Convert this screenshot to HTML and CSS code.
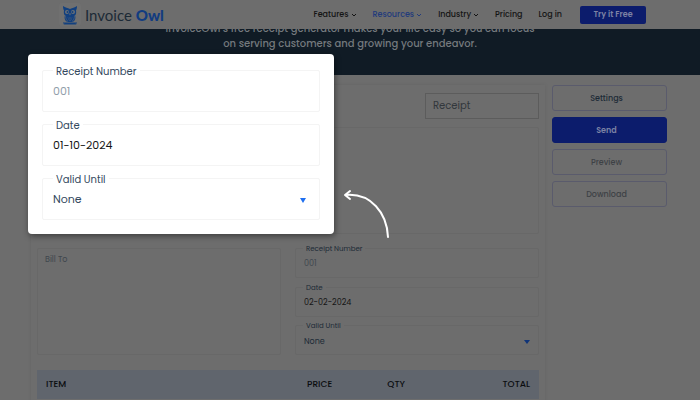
FILE: index.html
```html
<!DOCTYPE html>
<html lang="en">
<head>
    <meta charset="UTF-8">
    <meta name="viewport" content="width=device-width, initial-scale=1.0">
    <title>Receipt Generator - Invoice Owl</title>
    <link rel="stylesheet" href="styles.css">
</head>
<body>
    <header class="header">
        <a href="#" class="logo">
            <span class="logo-icon">
                <svg viewBox="0 0 32 40" width="16" height="20">
                    <path fill="#12407f" d="M2 2 C7 6 11 5 16 8 C21 5 25 6 30 2 C30 7 29 9 28 11 C29 16 28 19 26 21 C28 26 26 32 21 34 L11 34 C6 32 4 26 6 21 C4 19 3 16 4 11 C3 9 2 7 2 2 Z"/>
                    <circle cx="10" cy="14" r="4" fill="#6a6f77"/>
                    <circle cx="22" cy="14" r="4" fill="#6a6f77"/>
                    <circle cx="11" cy="14" r="2" fill="#12407f"/>
                    <circle cx="21" cy="14" r="2" fill="#12407f"/>
                    <path fill="#6a6f77" d="M14 17 L18 17 L16 21 Z"/>
                    <path fill="none" stroke="#6a6f77" stroke-width="1" d="M7 21 C7 27 9 31 12 33 M25 21 C25 27 23 31 20 33 M12 25 L14 27 L16 25 L18 27 L20 25 M13 29 L16 31 L19 29"/>
                    <path fill="#12407f" d="M2 35 H30 V37 H27 L29 39 H3 L5 37 H2 Z"/>
                </svg>
            </span>
            <span class="logo-text">Invoice <b>Owl</b></span>
        </a>
        <nav class="nav">
            <a href="#">Features <svg viewBox="0 0 6 4" width="6" height="4"><path d="M1 1 L3 3 L5 1"/></svg></a>
            <a href="#" class="active">Resources <svg viewBox="0 0 6 4" width="6" height="4"><path d="M1 1 L3 3 L5 1"/></svg></a>
            <a href="#">Industry <svg viewBox="0 0 6 4" width="6" height="4"><path d="M1 1 L3 3 L5 1"/></svg></a>
            <a href="#">Pricing</a>
            <a href="#">Log in</a>
        </nav>
        <button type="button" class="try-btn">Try it Free</button>
    </header>

    <section class="hero">
        <p>InvoiceOwl’s free receipt generator makes your life easy so you can focus<br>on serving customers and growing your endeavor.</p>
    </section>

    <main class="main">
        <form class="receipt">
            <input type="text" class="receipt-title" value="Receipt" aria-label="Title">
            <div class="company-box"></div>
            <div class="details">
                <textarea class="bill-to" placeholder="Bill To" aria-label="Bill To"></textarea>
                <div class="fields">
                    <div class="field">
                        <label for="receiptNo">Receipt Number</label>
                        <input type="text" id="receiptNo" placeholder="001">
                    </div>
                    <div class="field">
                        <label for="receiptDate">Date</label>
                        <input type="text" id="receiptDate" class="date" value="02-02-2024">
                    </div>
                    <div class="field select-field">
                        <label for="validUntil">Valid Until</label>
                        <select id="validUntil">
                            <option>None</option>
                        </select>
                    </div>
                </div>
            </div>
            <table class="items">
                <thead>
                    <tr>
                        <th class="item">ITEM</th>
                        <th class="price">PRICE</th>
                        <th>QTY</th>
                        <th class="total">TOTAL</th>
                    </tr>
                </thead>
            </table>
        </form>

        <aside class="actions">
            <button type="button">Settings</button>
            <button type="button" class="send">Send</button>
            <button type="button" class="muted">Preview</button>
            <button type="button" class="muted">Download</button>
        </aside>
    </main>

    <!-- Highlighted fields over the dimmed page -->
    <div class="popup">
        <div class="field">
            <label for="popupNo">Receipt Number</label>
            <input type="text" id="popupNo" placeholder="001">
        </div>
        <div class="field">
            <label for="popupDate">Date</label>
            <input type="text" id="popupDate" class="date" value="01-10-2024">
        </div>
        <div class="field select-field">
            <label for="popupValid">Valid Until</label>
            <select id="popupValid">
                <option>None</option>
            </select>
        </div>
    </div>
    <svg class="arrow" viewBox="0 0 50 54" width="50" height="54">
        <path d="M47 50 C46 26 30 6 5 8 M9 4 L4 8 L9 12"/>
    </svg>
</body>
</html>
```

FILE: styles.css
```css
* {
    box-sizing: border-box;
}

body {
    position: relative;
    margin: 0;
    min-height: 100vh;
    overflow: hidden;
    background-color: #6d6d6d;
    font-family: Poppins, Inter, sans-serif;
    color: #1c2a36;
}

input,
select,
textarea,
button {
    font-family: inherit;
}

.header {
    display: flex;
    align-items: center;
    height: 29px;
    padding: 0 54px 0 59px;
    background-color: #6d6d6d;
}

.logo {
    display: flex;
    align-items: center;
    gap: 4px;
    color: #1c2a36;
    text-decoration: none;
}

.logo-icon {
    display: flex;
    align-items: center;
    justify-content: center;
    width: 22px;
    height: 23px;
    border-radius: 3px;
    background-color: #707070;
}

.logo-text {
    font-family: Lato, sans-serif;
    font-size: 15px;
    line-height: 20px;
    font-weight: 400;
    white-space: nowrap;
}

.logo-text b {
    font-weight: 900;
    color: #123c80;
}

.nav {
    display: flex;
    gap: 16px;
    margin-left: auto;
}

.nav a {
    display: flex;
    align-items: center;
    gap: 2px;
    font-size: 8px;
    line-height: 12px;
    font-weight: 500;
    color: #141414;
    text-decoration: none;
    white-space: nowrap;
}

.nav a.active {
    color: #223b7c;
}

.nav svg {
    fill: none;
    stroke: currentColor;
}

.try-btn {
    width: 66px;
    height: 18px;
    margin-left: 18px;
    padding: 0;
    border: none;
    border-radius: 2px;
    background-color: #0c1c6c;
    color: #7c82a4;
    font-size: 8px;
    font-weight: 600;
}

.hero {
    display: flex;
    align-items: flex-end;
    justify-content: center;
    height: 46px;
    padding-bottom: 24px;
    overflow: hidden;
    background-color: #101b25;
    color: #74797d;
    text-align: center;
}

.hero p {
    margin: 0;
    font-size: 10px;
    line-height: 15px;
    font-weight: 500;
}

.main {
    display: grid;
    grid-template-columns: minmax(0, 1fr) 115px;
    gap: 7px;
    padding: 10px 33px 0 31px;
}

.receipt {
    padding: 8px 6px;
    box-shadow: 0 0 4px rgba(0, 0, 0, 0.08);
}

.receipt-title {
    display: block;
    width: 114px;
    height: 26px;
    margin-left: auto;
    padding: 0 7px;
    border: 1px solid #5c5c5c;
    background: transparent;
    font-size: 10px;
    color: #32373c;
}

.company-box {
    height: 107px;
    margin: 8px 0 14px;
    border: 1px solid #686868;
    border-radius: 2px;
}

.details {
    display: grid;
    grid-template-columns: 1fr 1fr;
    gap: 14px;
    height: 107px;
}

.bill-to {
    padding: 5px 7px;
    border: 1px solid #686868;
    border-radius: 2px;
    background: transparent;
    font-size: 8px;
    line-height: 12px;
    resize: none;
}

.bill-to::placeholder {
    color: #3f474e;
}

.fields {
    display: flex;
    flex-direction: column;
    justify-content: space-between;
}

.field {
    position: relative;
    height: 30px;
    border: 1px solid #686868;
    border-radius: 2px;
}

.field label {
    position: absolute;
    top: -5px;
    left: 7px;
    padding: 0 3px;
    background-color: #6d6d6d;
    font-size: 7px;
    line-height: 10px;
}

.field input,
.field select {
    display: block;
    width: 100%;
    height: 100%;
    padding: 2px 8px 0;
    border: none;
    background: transparent;
    appearance: none;
    font-size: 8px;
    color: #1c2a36;
}

.field input::placeholder {
    color: #3f474e;
}

.field .date {
    color: #141414;
}

.select-field::after {
    content: "";
    position: absolute;
    top: 14px;
    right: 8px;
    width: 6px;
    height: 4px;
    background-color: #0f3478;
    clip-path: polygon(0 0, 100% 0, 50% 100%);
    pointer-events: none;
}

.items {
    width: 100%;
    margin-top: 15px;
    border-collapse: collapse;
    table-layout: fixed;
    background-color: #60656d;
}

.items th {
    height: 29px;
    padding: 0 9px;
    font-size: 9px;
    font-weight: 500;
    text-align: left;
    color: #0b0d10;
}

.items .item {
    width: 52%;
}

.items .price {
    width: 16%;
}

.items .total {
    text-align: right;
}

.actions {
    display: flex;
    flex-direction: column;
    gap: 6px;
}

.actions button {
    height: 26px;
    padding: 1px 6px 0 0;
    border: 1px solid #5a5b6c;
    border-radius: 3px;
    background: transparent;
    font-size: 8px;
    font-weight: 500;
    color: #1c2a36;
}

.actions .send {
    border-color: #0c1c6c;
    background-color: #0c1c6c;
    color: #7c82a4;
    font-weight: 600;
}

.actions .muted {
    color: #3e4246;
}

.popup {
    position: absolute;
    top: 54px;
    left: 28px;
    display: flex;
    flex-direction: column;
    gap: 12px;
    width: 306px;
    padding: 16px 14px 14px;
    border-radius: 4px;
    background-color: #fff;
    box-shadow: 1px 2px 6px rgba(0, 0, 0, 0.45);
}

.popup .field {
    height: 42px;
    border-color: #f4f4f4;
}

.popup .field label {
    top: -6px;
    left: 10px;
    background-color: #fff;
    font-size: 10px;
    line-height: 14px;
    color: #34495e;
}

.popup .field input,
.popup .field select {
    padding: 0 10px;
    font-size: 11px;
    color: #34495e;
}

.popup .field input::placeholder {
    color: #929eaa;
}

.popup .field .date {
    color: #141414;
}

.popup .select-field::after {
    top: 19px;
    right: 13px;
    height: 5px;
    background-color: #1f6ff0;
}

.arrow {
    position: absolute;
    top: 187px;
    left: 341px;
    fill: none;
    stroke: #fff;
    stroke-width: 2;
    stroke-linecap: round;
    stroke-linejoin: round;
}
```
